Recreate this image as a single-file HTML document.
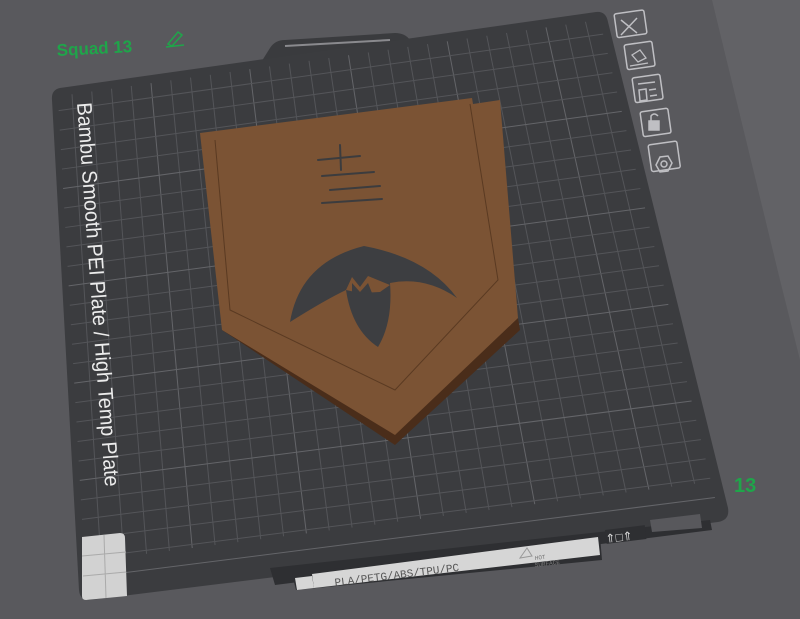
<!DOCTYPE html>
<html><head><meta charset="utf-8"><style>
html,body{margin:0;padding:0;background:#59595d;width:800px;height:619px;overflow:hidden}
svg{display:block}
</style></head><body>
<svg id="s" width="800" height="619" viewBox="0 0 800 619" xmlns="http://www.w3.org/2000/svg">
<rect width="800" height="619" fill="#59595d"/>
<polygon points="712,0 800,0 800,360 780,280" fill="#626266"/>
<path d="M255,72 L270,48 Q275,40 285,40 L395,33 Q405,33 410,40 L420,58 Z" fill="#3a3b3e"/>
<line x1="285" y1="46" x2="390" y2="40" stroke="#8a8a8e" stroke-width="2"/>
<path id="plate" d="M60,88 L596,12 Q606,11 608,22 L728,508 Q730,520 718,522 L90,600 Q80,601 79,590 L52,100 Q51,90 60,88 Z" fill="#3b3c3f"/>
<g id="grid" stroke="#545559" stroke-width="1" fill="none"></g>
<polygon points="270,568 710,520 712,530 275,585" fill="#2e2f32"/>
<polygon points="292,574 600,536 602,560 296,590" fill="#2e2f32"/>
<polygon points="312,574 598,537 600,555 314,588" fill="#d6d6d6"/>
<polygon points="295,578 312,576 314,588 297,590" fill="#d6d6d6"/>
<text x="335" y="586" font-family="Liberation Mono,monospace" font-size="11" fill="#555" transform="rotate(-7 335 586)">PLA/PETG/ABS/TPU/PC</text>
<text x="535" y="560" font-family="Liberation Mono,monospace" font-size="6" fill="#777" transform="rotate(-7 535 560)">HOT</text>
<text x="535" y="567" font-family="Liberation Mono,monospace" font-size="6" fill="#777" transform="rotate(-7 535 567)">SURFACE</text>
<polygon points="520,558 527,548 532,556" fill="none" stroke="#999"/>
<rect x="605" y="530" width="40" height="14" fill="#2e2f32" transform="rotate(-7 605 530)"/>
<text x="606" y="543" font-family="Liberation Sans,sans-serif" font-size="12" fill="#ddd" transform="rotate(-7 606 543)">⇑□⇑</text>
<polygon points="650,520 700,514 702,528 652,532" fill="#58585c"/>
<path d="M82,537 L120,533 Q125,533 125,538 L127,596 L86,600 Q82,600 82,596 Z" fill="#d2d2d2"/>
<path d="M104,535 L106,598 M82,556 L126,552 M83,576 L126,572" stroke="#aaa" stroke-width="1"/>
<g fill="none" stroke="#bfbfc3" stroke-width="1.5">
<rect x="614" y="14" width="30" height="24" rx="2" transform="rotate(-8 614 14)"/>
<path d="M621,20 L637,33 M637,18 L621,35"/>
<rect x="624" y="45" width="28" height="25" rx="2" transform="rotate(-8 624 45)"/>
<rect x="632" y="78" width="28" height="25" rx="2" transform="rotate(-8 632 78)"/>
<path d="M638,84 L655,82 M639,90 L646,89 L647,100 L640,101 Z M649,90 L656,89 M650,96 L657,95"/>
<rect x="640" y="112" width="28" height="25" rx="2" transform="rotate(-8 640 112)"/>
<rect x="649" y="121" width="10" height="9" fill="#bfbfc3"/>
<path d="M651,121 L651,116 Q654,112 658,116"/>
<rect x="648" y="145" width="29" height="27" rx="2" transform="rotate(-8 648 145)"/>
<polygon points="656,165 660,157 668,156 672,163 668,171 660,172"/>
<circle cx="664" cy="164" r="3"/>
</g>
<path d="M632,55 L640,50 L646,58 L638,62 Z M630,66 L648,63" fill="none" stroke="#bfbfc3" stroke-width="1.3"/>
<path d="M222,330 L395,445 L520,330 L518,318 L395,433 L222,322 Z" fill="#4a2d1a"/>
<path d="M200,133 L472,98 L473,104 L500,100 L518,318 L395,435 L222,330 Z" fill="#7b5334"/>
<path d="M470,104 L498,280 L395,390 L230,310 L215,140" fill="none" stroke="#5a3a22" stroke-width="1"/>
<g stroke="#3c3c3e" stroke-width="2" fill="none" stroke-linecap="round">
<path d="M318,160 L360,156 M340,145 L341,170 M322,176 L374,172 M330,190 L380,186 M322,203 L382,199"/>
</g>
<path d="M290,322 Q300,262 364,246 Q428,258 457,298 Q425,276 390,283 Q393,322 378,347 Q352,330 346,290 Q325,300 290,322 Z" fill="#3d3e41"/>
<path d="M346,290 L352,277 L360,287 L368,276 L390,285 L380,292 L360,293 Z" fill="#7b5334"/>
<path d="M352,283 L360,292 L368,283 L372,293 L352,294 Z" fill="#3d3e41"/>
<text x="57" y="56" font-family="Liberation Sans,sans-serif" font-weight="bold" font-size="17" fill="#1fa54a" transform="rotate(-3 57 56)">Squad 13</text>
<path d="M168,44 L178,32 L182,35 L172,46 Z M166,47 L184,45" fill="none" stroke="#1fa54a" stroke-width="1.5"/>
<text x="734" y="492" font-family="Liberation Sans,sans-serif" font-weight="bold" font-size="20" fill="#1fa54a">13</text>
<text x="0" y="0" font-family="Liberation Sans,sans-serif" font-size="21" fill="#ececec" textLength="385" lengthAdjust="spacingAndGlyphs" transform="translate(77,103) rotate(85.8)">Bambu Smooth PEI Plate / High Temp Plate</text>
</svg>
<script>
(function(){
var TL=[52,92],TR=[604,14],BR=[726,516],BL=[80,598];
function P(u,v){var t=[TL[0]+(TR[0]-TL[0])*u,TL[1]+(TR[1]-TL[1])*u],b=[BL[0]+(BR[0]-BL[0])*u,BL[1]+(BR[1]-BL[1])*u];return [t[0]+(b[0]-t[0])*v,t[1]+(b[1]-t[1])*v];}
var g=document.getElementById('grid'),ns='http://www.w3.org/2000/svg',N=28,M=26;
function L(a,b,w){var l=document.createElementNS(ns,'line');l.setAttribute('x1',a[0]);l.setAttribute('y1',a[1]);l.setAttribute('x2',b[0]);l.setAttribute('y2',b[1]);if(w)l.setAttribute('stroke','#646569');g.appendChild(l);}
for(var i=1;i<N;i++){L(P(i/N,0.01),P(i/N,0.93),i%5==0);}
for(var j=1;j<M;j++){L(P(0.01,j/M),P(0.99,j/M),j%5==0);}
})();
</script>
</body></html>
